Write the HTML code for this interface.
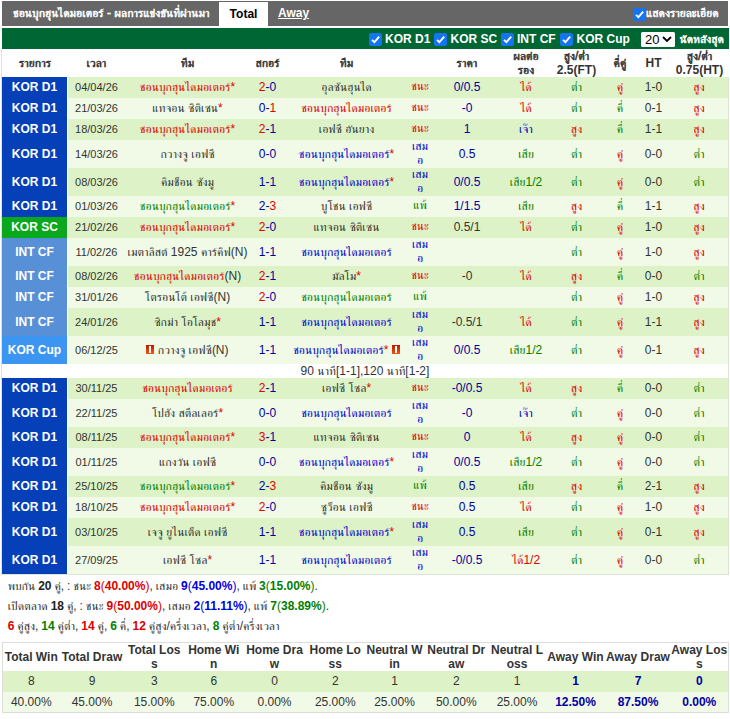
<!DOCTYPE html>
<html lang="th"><head><meta charset="utf-8"><title>ชอนบุกฮุนไดมอเตอร์</title>
<style>
html,body{margin:0;padding:0;background:#fff}
body{font-family:"Liberation Sans",FreeSerif,sans-serif;font-size:12px;color:#333;width:730px;height:719px;overflow:hidden;position:relative}
.top{position:absolute;left:2px;top:1px;width:726px;height:25px;background:#666;color:#fff;font-weight:bold}
.top .ti{position:absolute;left:11px;top:0;line-height:25px;font-size:12px;white-space:nowrap}
.top .tab{position:absolute;left:217px;top:1px;width:49px;height:26px;line-height:24px;background:#fff;color:#000;text-align:center;font-size:12px}
.top .aw{position:absolute;left:276px;top:0;line-height:25px;font-size:12px;text-decoration:underline;color:#fff}
.top .ck{position:absolute;left:631px;top:7px}
.top .dl{position:absolute;left:644px;top:0;line-height:25px;font-size:12px;white-space:nowrap}
.tb{font-weight:normal;-webkit-text-stroke:0.042em}
.cb{display:inline-block;width:13px;height:13px;background:#1574f0;border-radius:2px;position:relative;vertical-align:middle}
.cb svg{position:absolute;left:0;top:0}
.bar{position:absolute;left:2px;top:28px;width:727px;height:21px;background:#006633;color:#fff;font-weight:bold;font-size:12px;line-height:21px;white-space:nowrap}
.bar .it{position:absolute;top:1px}
.bar .cb{position:absolute;top:5px}
.sel{position:absolute;left:639px;top:4px;width:34px;height:15px;background:#fff;border-radius:1.5px;color:#000;font-weight:normal;font-size:13px;line-height:15px}
.sel span{position:absolute;left:4px;top:0}
.sel svg{position:absolute;left:21px;top:4px}
table.m{position:absolute;left:2px;top:49px;width:727px;border-collapse:separate;border-spacing:0;table-layout:fixed;font-size:12px}
table.m th{height:27.5px;padding:0;font-weight:bold;font-size:12px;line-height:14px;color:#333;background:#fff;text-align:center}
table.m td{padding:0 0 1px;text-align:center;height:20px;line-height:14px;overflow:hidden;white-space:nowrap}
tr.t td{height:27px}
table.m tr:last-child td{border-bottom:1px solid #dde3d6}
table.m tr td:last-child{border-right:1px solid #dde3d6}
tr.a td{background:#ddf3c7}
tr.c td{background:#f0fae6}
tr.ex td{background:#fff;height:14px;line-height:14px;font-size:12px;padding:0}
td.lg{color:#fff;font-weight:bold;font-size:12px;border-right:1px solid #fff}
tr td.l1{background:#0540b8}
tr td.l2{background:#0aa81c}
tr td.l3{background:#5890d8}
tr td.l4{background:#3d95f2}
td.dt{font-size:11px}
td.sc{color:#0000a0;font-size:12px}
td.pr{font-size:12px}
td.ht{font-size:12px}
.r{color:#dd0000}.b{color:#0000cc}.g{color:#008000}
.st{color:#dd0000}
table.m td.rs{line-height:13.5px}
.cd{display:inline-block;width:8px;height:9px;background:linear-gradient(#c01800,#ec5a12);position:relative;vertical-align:0}
.cd:after{content:"";position:absolute;left:3px;top:1px;width:2px;height:7px;background:#fff}
.sum{position:absolute;left:7.7px;word-spacing:-0.4px;font-size:12px;line-height:20px;white-space:nowrap}
.sum b.k{color:#222}
.sum .b{color:#0000dd}
td.pr.b{color:#0000a0}
.sw{position:absolute;left:2px;top:642px;width:725px;border:1px solid #ddd}
table.s{width:725px;border-collapse:separate;border-spacing:0;table-layout:fixed;font-size:12px}
table.s th{height:28px;padding:0;font-size:12px;line-height:14px;white-space:nowrap;font-weight:bold;text-align:center;background:#fff}
table.s td{height:20.5px;padding:0;text-align:center;line-height:14px}
table.s .aw{color:#0000a8;font-weight:bold}
</style></head><body>
<div class="top"><span class="ti tb">ชอนบุกฮุนไดมอเตอร์ - ผลการแข่งขันที่ผ่านมา</span><span class="tab">Total</span><span class="aw">Away</span>
<span class="cb ck"><svg width="13" height="13" viewBox="0 0 13 13"><path d="M3 6.8 L5.4 9.2 L10.2 3.6" fill="none" stroke="#fff" stroke-width="1.8"/></svg></span><span class="dl tb">แสดงรายละเอียด</span></div>
<div class="bar">
<span class="cb" style="left:367px"><svg width="13" height="13" viewBox="0 0 13 13"><path d="M3 6.8 L5.4 9.2 L10.2 3.6" fill="none" stroke="#fff" stroke-width="1.8"/></svg></span><span class="it" style="left:383px">KOR D1</span>
<span class="cb" style="left:432px"><svg width="13" height="13" viewBox="0 0 13 13"><path d="M3 6.8 L5.4 9.2 L10.2 3.6" fill="none" stroke="#fff" stroke-width="1.8"/></svg></span><span class="it" style="left:448.5px">KOR SC</span>
<span class="cb" style="left:499px"><svg width="13" height="13" viewBox="0 0 13 13"><path d="M3 6.8 L5.4 9.2 L10.2 3.6" fill="none" stroke="#fff" stroke-width="1.8"/></svg></span><span class="it" style="left:515px">INT CF</span>
<span class="cb" style="left:558px"><svg width="13" height="13" viewBox="0 0 13 13"><path d="M3 6.8 L5.4 9.2 L10.2 3.6" fill="none" stroke="#fff" stroke-width="1.8"/></svg></span><span class="it" style="left:574.5px">KOR Cup</span>
<span class="sel"><span>20</span><svg width="10" height="7" viewBox="0 0 10 7"><path d="M1 1 L5 5 L9 1" fill="none" stroke="#000" stroke-width="1.8"/></svg></span>
<span class="it tb" style="left:677.5px;font-size:12px">นัดหลังสุด</span>
</div>
<div style="position:absolute;left:1px;top:49px;width:1px;height:526px;background:#e0e0e0"></div>
<table class="m"><colgroup><col style="width:66px"><col style="width:57px"><col style="width:125px"><col style="width:35px"><col style="width:123px"><col style="width:24px"><col style="width:70px"><col style="width:48px"><col style="width:53px"><col style="width:34px"><col style="width:33px"><col style="width:59px"></colgroup>
<tr><th><span class="tb">รายการ</span></th><th><span class="tb">เวลา</span></th><th><span class="tb">ทีม</span></th><th><span class="tb">สกอร์</span></th><th><span class="tb">ทีม</span></th><th></th><th><span class="tb">ราคา</span></th><th><span class="tb">ผลต่อ<br>รอง</span></th><th><span class="tb">สูง/ต่ำ</span><br>2.5(FT)</th><th><span class="tb">คี่คู่</span></th><th>HT</th><th><span class="tb">สูง/ต่ำ</span><br>0.75(HT)</th></tr>
<tr class="a"><td class="lg l1">KOR D1</td><td class="dt">04/04/26</td><td><span class="r">ชอนบุกฮุนไดมอเตอร์</span><span class="st">*</span></td><td class="sc"><span class="r">2</span>-0</td><td>อุลซันฮุนได</td><td class="rs"><span class="r">ชนะ</span></td><td class="pr b">0/0.5</td><td><span class="r">ได้</span></td><td><span class="g">ต่ำ</span></td><td><span class="r">คู่</span></td><td class="ht">1-0</td><td><span class="r">สูง</span></td></tr>
<tr class="c"><td class="lg l1">KOR D1</td><td class="dt">21/03/26</td><td>แทจอน ซิติเซน<span class="st">*</span></td><td class="sc">0-<span class="r">1</span></td><td><span class="r">ชอนบุกฮุนไดมอเตอร์</span></td><td class="rs"><span class="r">ชนะ</span></td><td class="pr b">-0</td><td><span class="r">ได้</span></td><td><span class="g">ต่ำ</span></td><td><span class="g">คี่</span></td><td class="ht">0-1</td><td><span class="r">สูง</span></td></tr>
<tr class="a"><td class="lg l1">KOR D1</td><td class="dt">18/03/26</td><td><span class="r">ชอนบุกฮุนไดมอเตอร์</span><span class="st">*</span></td><td class="sc"><span class="r">2</span>-1</td><td>เอฟซี อันยาง</td><td class="rs"><span class="r">ชนะ</span></td><td class="pr b">1</td><td><span class="b">เจ๊า</span></td><td><span class="r">สูง</span></td><td><span class="g">คี่</span></td><td class="ht">1-1</td><td><span class="r">สูง</span></td></tr>
<tr class="c t"><td class="lg l1">KOR D1</td><td class="dt">14/03/26</td><td>กวางจู เอฟซี</td><td class="sc">0-0</td><td><span class="b">ชอนบุกฮุนไดมอเตอร์</span><span class="st">*</span></td><td class="rs"><span class="b">เสม<br>อ</span></td><td class="pr b">0.5</td><td><span class="g">เสีย</span></td><td><span class="g">ต่ำ</span></td><td><span class="r">คู่</span></td><td class="ht">0-0</td><td><span class="g">ต่ำ</span></td></tr>
<tr class="a t"><td class="lg l1">KOR D1</td><td class="dt">08/03/26</td><td>คิมช็อน ซังมู</td><td class="sc">1-1</td><td><span class="b">ชอนบุกฮุนไดมอเตอร์</span><span class="st">*</span></td><td class="rs"><span class="b">เสม<br>อ</span></td><td class="pr b">0/0.5</td><td><span class="g">เสีย1/2</span></td><td><span class="g">ต่ำ</span></td><td><span class="r">คู่</span></td><td class="ht">0-0</td><td><span class="g">ต่ำ</span></td></tr>
<tr class="c"><td class="lg l1">KOR D1</td><td class="dt">01/03/26</td><td><span class="g">ชอนบุกฮุนไดมอเตอร์</span><span class="st">*</span></td><td class="sc">2-<span class="r">3</span></td><td>บูโชน เอฟซี</td><td class="rs"><span class="g">แพ้</span></td><td class="pr b">1/1.5</td><td><span class="g">เสีย</span></td><td><span class="r">สูง</span></td><td><span class="g">คี่</span></td><td class="ht">1-1</td><td><span class="r">สูง</span></td></tr>
<tr class="a"><td class="lg l2">KOR SC</td><td class="dt">21/02/26</td><td><span class="r">ชอนบุกฮุนไดมอเตอร์</span><span class="st">*</span></td><td class="sc"><span class="r">2</span>-0</td><td>แทจอน ซิติเซน</td><td class="rs"><span class="r">ชนะ</span></td><td class="pr k">0.5/1</td><td><span class="r">ได้</span></td><td><span class="g">ต่ำ</span></td><td><span class="r">คู่</span></td><td class="ht">1-0</td><td><span class="r">สูง</span></td></tr>
<tr class="c t"><td class="lg l3">INT CF</td><td class="dt">11/02/26</td><td>เมตาลิสต์ 1925 คาร์คิฟ(N)</td><td class="sc">1-1</td><td><span class="b">ชอนบุกฮุนไดมอเตอร์</span></td><td class="rs"><span class="b">เสม<br>อ</span></td><td class="pr k"></td><td></td><td><span class="g">ต่ำ</span></td><td><span class="r">คู่</span></td><td class="ht">1-0</td><td><span class="r">สูง</span></td></tr>
<tr class="a"><td class="lg l3">INT CF</td><td class="dt">08/02/26</td><td><span class="r">ชอนบุกฮุนไดมอเตอร์</span>(N)</td><td class="sc"><span class="r">2</span>-1</td><td>มัลโม<span class="st">*</span></td><td class="rs"><span class="r">ชนะ</span></td><td class="pr k">-0</td><td><span class="r">ได้</span></td><td><span class="r">สูง</span></td><td><span class="g">คี่</span></td><td class="ht">0-0</td><td><span class="g">ต่ำ</span></td></tr>
<tr class="c"><td class="lg l3">INT CF</td><td class="dt">31/01/26</td><td>โตรอนโต้ เอฟซี(N)</td><td class="sc"><span class="r">2</span>-0</td><td><span class="g">ชอนบุกฮุนไดมอเตอร์</span></td><td class="rs"><span class="g">แพ้</span></td><td class="pr k"></td><td></td><td><span class="g">ต่ำ</span></td><td><span class="r">คู่</span></td><td class="ht">1-0</td><td><span class="r">สูง</span></td></tr>
<tr class="a t"><td class="lg l3">INT CF</td><td class="dt">24/01/26</td><td>ซิกม่า โอโลมุช<span class="st">*</span></td><td class="sc">1-1</td><td><span class="b">ชอนบุกฮุนไดมอเตอร์</span></td><td class="rs"><span class="b">เสม<br>อ</span></td><td class="pr k">-0.5/1</td><td><span class="r">ได้</span></td><td><span class="g">ต่ำ</span></td><td><span class="r">คู่</span></td><td class="ht">1-1</td><td><span class="r">สูง</span></td></tr>
<tr class="c t"><td class="lg l4">KOR Cup</td><td class="dt">06/12/25</td><td><i class="cd"></i> กวางจู เอฟซี(N)</td><td class="sc">1-1</td><td><span class="b">ชอนบุกฮุนไดมอเตอร์</span><span class="st">*</span> <i class="cd"></i></td><td class="rs"><span class="b">เสม<br>อ</span></td><td class="pr b">0/0.5</td><td><span class="g">เสีย1/2</span></td><td><span class="g">ต่ำ</span></td><td><span class="r">คู่</span></td><td class="ht">0-1</td><td><span class="r">สูง</span></td></tr>
<tr class="ex"><td colspan="12">90 นาที[1-1],120 นาที[1-2]</td></tr>
<tr class="a"><td class="lg l1">KOR D1</td><td class="dt">30/11/25</td><td><span class="r">ชอนบุกฮุนไดมอเตอร์</span></td><td class="sc"><span class="r">2</span>-1</td><td>เอฟซี โซล<span class="st">*</span></td><td class="rs"><span class="r">ชนะ</span></td><td class="pr b">-0/0.5</td><td><span class="r">ได้</span></td><td><span class="r">สูง</span></td><td><span class="g">คี่</span></td><td class="ht">0-0</td><td><span class="g">ต่ำ</span></td></tr>
<tr class="c t"><td class="lg l1">KOR D1</td><td class="dt">22/11/25</td><td>โปฮัง สตีลเลอร์<span class="st">*</span></td><td class="sc">0-0</td><td><span class="b">ชอนบุกฮุนไดมอเตอร์</span></td><td class="rs"><span class="b">เสม<br>อ</span></td><td class="pr b">-0</td><td><span class="b">เจ๊า</span></td><td><span class="g">ต่ำ</span></td><td><span class="r">คู่</span></td><td class="ht">0-0</td><td><span class="g">ต่ำ</span></td></tr>
<tr class="a"><td class="lg l1">KOR D1</td><td class="dt">08/11/25</td><td><span class="r">ชอนบุกฮุนไดมอเตอร์</span><span class="st">*</span></td><td class="sc"><span class="r">3</span>-1</td><td>แทจอน ซิติเซน</td><td class="rs"><span class="r">ชนะ</span></td><td class="pr b">0</td><td><span class="r">ได้</span></td><td><span class="r">สูง</span></td><td><span class="r">คู่</span></td><td class="ht">0-0</td><td><span class="g">ต่ำ</span></td></tr>
<tr class="c t"><td class="lg l1">KOR D1</td><td class="dt">01/11/25</td><td>แกงวัน เอฟซี</td><td class="sc">0-0</td><td><span class="b">ชอนบุกฮุนไดมอเตอร์</span><span class="st">*</span></td><td class="rs"><span class="b">เสม<br>อ</span></td><td class="pr b">0/0.5</td><td><span class="g">เสีย1/2</span></td><td><span class="g">ต่ำ</span></td><td><span class="r">คู่</span></td><td class="ht">0-0</td><td><span class="g">ต่ำ</span></td></tr>
<tr class="a"><td class="lg l1">KOR D1</td><td class="dt">25/10/25</td><td><span class="g">ชอนบุกฮุนไดมอเตอร์</span><span class="st">*</span></td><td class="sc">2-<span class="r">3</span></td><td>คิมช็อน ซังมู</td><td class="rs"><span class="g">แพ้</span></td><td class="pr b">0.5</td><td><span class="g">เสีย</span></td><td><span class="r">สูง</span></td><td><span class="g">คี่</span></td><td class="ht">2-1</td><td><span class="r">สูง</span></td></tr>
<tr class="c"><td class="lg l1">KOR D1</td><td class="dt">18/10/25</td><td><span class="r">ชอนบุกฮุนไดมอเตอร์</span><span class="st">*</span></td><td class="sc"><span class="r">2</span>-0</td><td>ซูว็อน เอฟซี</td><td class="rs"><span class="r">ชนะ</span></td><td class="pr b">0.5</td><td><span class="r">ได้</span></td><td><span class="g">ต่ำ</span></td><td><span class="r">คู่</span></td><td class="ht">1-0</td><td><span class="r">สูง</span></td></tr>
<tr class="a t"><td class="lg l1">KOR D1</td><td class="dt">03/10/25</td><td>เจจู ยูไนเต็ด เอฟซี</td><td class="sc">1-1</td><td><span class="b">ชอนบุกฮุนไดมอเตอร์</span><span class="st">*</span></td><td class="rs"><span class="b">เสม<br>อ</span></td><td class="pr b">0.5</td><td><span class="g">เสีย</span></td><td><span class="g">ต่ำ</span></td><td><span class="r">คู่</span></td><td class="ht">0-1</td><td><span class="r">สูง</span></td></tr>
<tr class="c t"><td class="lg l1">KOR D1</td><td class="dt">27/09/25</td><td>เอฟซี โซล<span class="st">*</span></td><td class="sc">1-1</td><td><span class="b">ชอนบุกฮุนไดมอเตอร์</span></td><td class="rs"><span class="b">เสม<br>อ</span></td><td class="pr b">-0/0.5</td><td><span class="r">ได้1/2</span></td><td><span class="g">ต่ำ</span></td><td><span class="r">คู่</span></td><td class="ht">0-0</td><td><span class="g">ต่ำ</span></td></tr>
</table>
<div class="sum" style="top:576px">พบกัน <b class="k">20</b> คู่, : ชนะ <span class="r"><b>8</b>(<b>40.00%</b>)</span>, เสมอ <span class="b"><b>9</b>(<b>45.00%</b>)</span>, แพ้ <span class="g"><b>3</b>(<b>15.00%</b>)</span>.</div>
<div class="sum" style="top:596px">เปิดตลาด <b class="k">18</b> คู่, : ชนะ <span class="r"><b>9</b>(<b>50.00%</b>)</span>, เสมอ <span class="b"><b>2</b>(<b>11.11%</b>)</span>, แพ้ <span class="g"><b>7</b>(<b>38.89%</b>)</span>.</div>
<div class="sum" style="top:616px"><b class="r">6</b> คู่สูง, <b class="g">14</b> คู่ต่ำ, <b class="r">14</b> คู่, <b class="g">6</b> คี่, <b class="r">12</b> คู่สูง/ครึ่งเวลา, <b class="g">8</b> คู่ต่ำ/ครึ่งเวลา</div>
<div class="sw"><table class="s"><colgroup><col style="width:56.5px"><col style="width:65.0px"><col style="width:59.5px"><col style="width:59.5px"><col style="width:62.0px"><col style="width:59.5px"><col style="width:59px"><col style="width:64.5px"><col style="width:57.0px"><col style="width:60.0px"><col style="width:65.0px"><col style="width:57.5px"></colgroup>
<tr><th>Total Win</th><th>Total Draw</th><th>Total Los<br>s</th><th>Home Wi<br>n</th><th>Home Dra<br>w</th><th>Home Lo<br>ss</th><th>Neutral W<br>in</th><th>Neutral Dr<br>aw</th><th>Neutral L<br>oss</th><th>Away Win</th><th>Away Draw</th><th>Away Los<br>s</th></tr>
<tr class="a"><td>8</td><td>9</td><td>3</td><td>6</td><td>0</td><td>2</td><td>1</td><td>2</td><td>1</td><td class="aw">1</td><td class="aw">7</td><td class="aw">0</td></tr>
<tr class="c"><td>40.00%</td><td>45.00%</td><td>15.00%</td><td>75.00%</td><td>0.00%</td><td>25.00%</td><td>25.00%</td><td>50.00%</td><td>25.00%</td><td class="aw">12.50%</td><td class="aw">87.50%</td><td class="aw">0.00%</td></tr>
</table></div>
</body></html>
